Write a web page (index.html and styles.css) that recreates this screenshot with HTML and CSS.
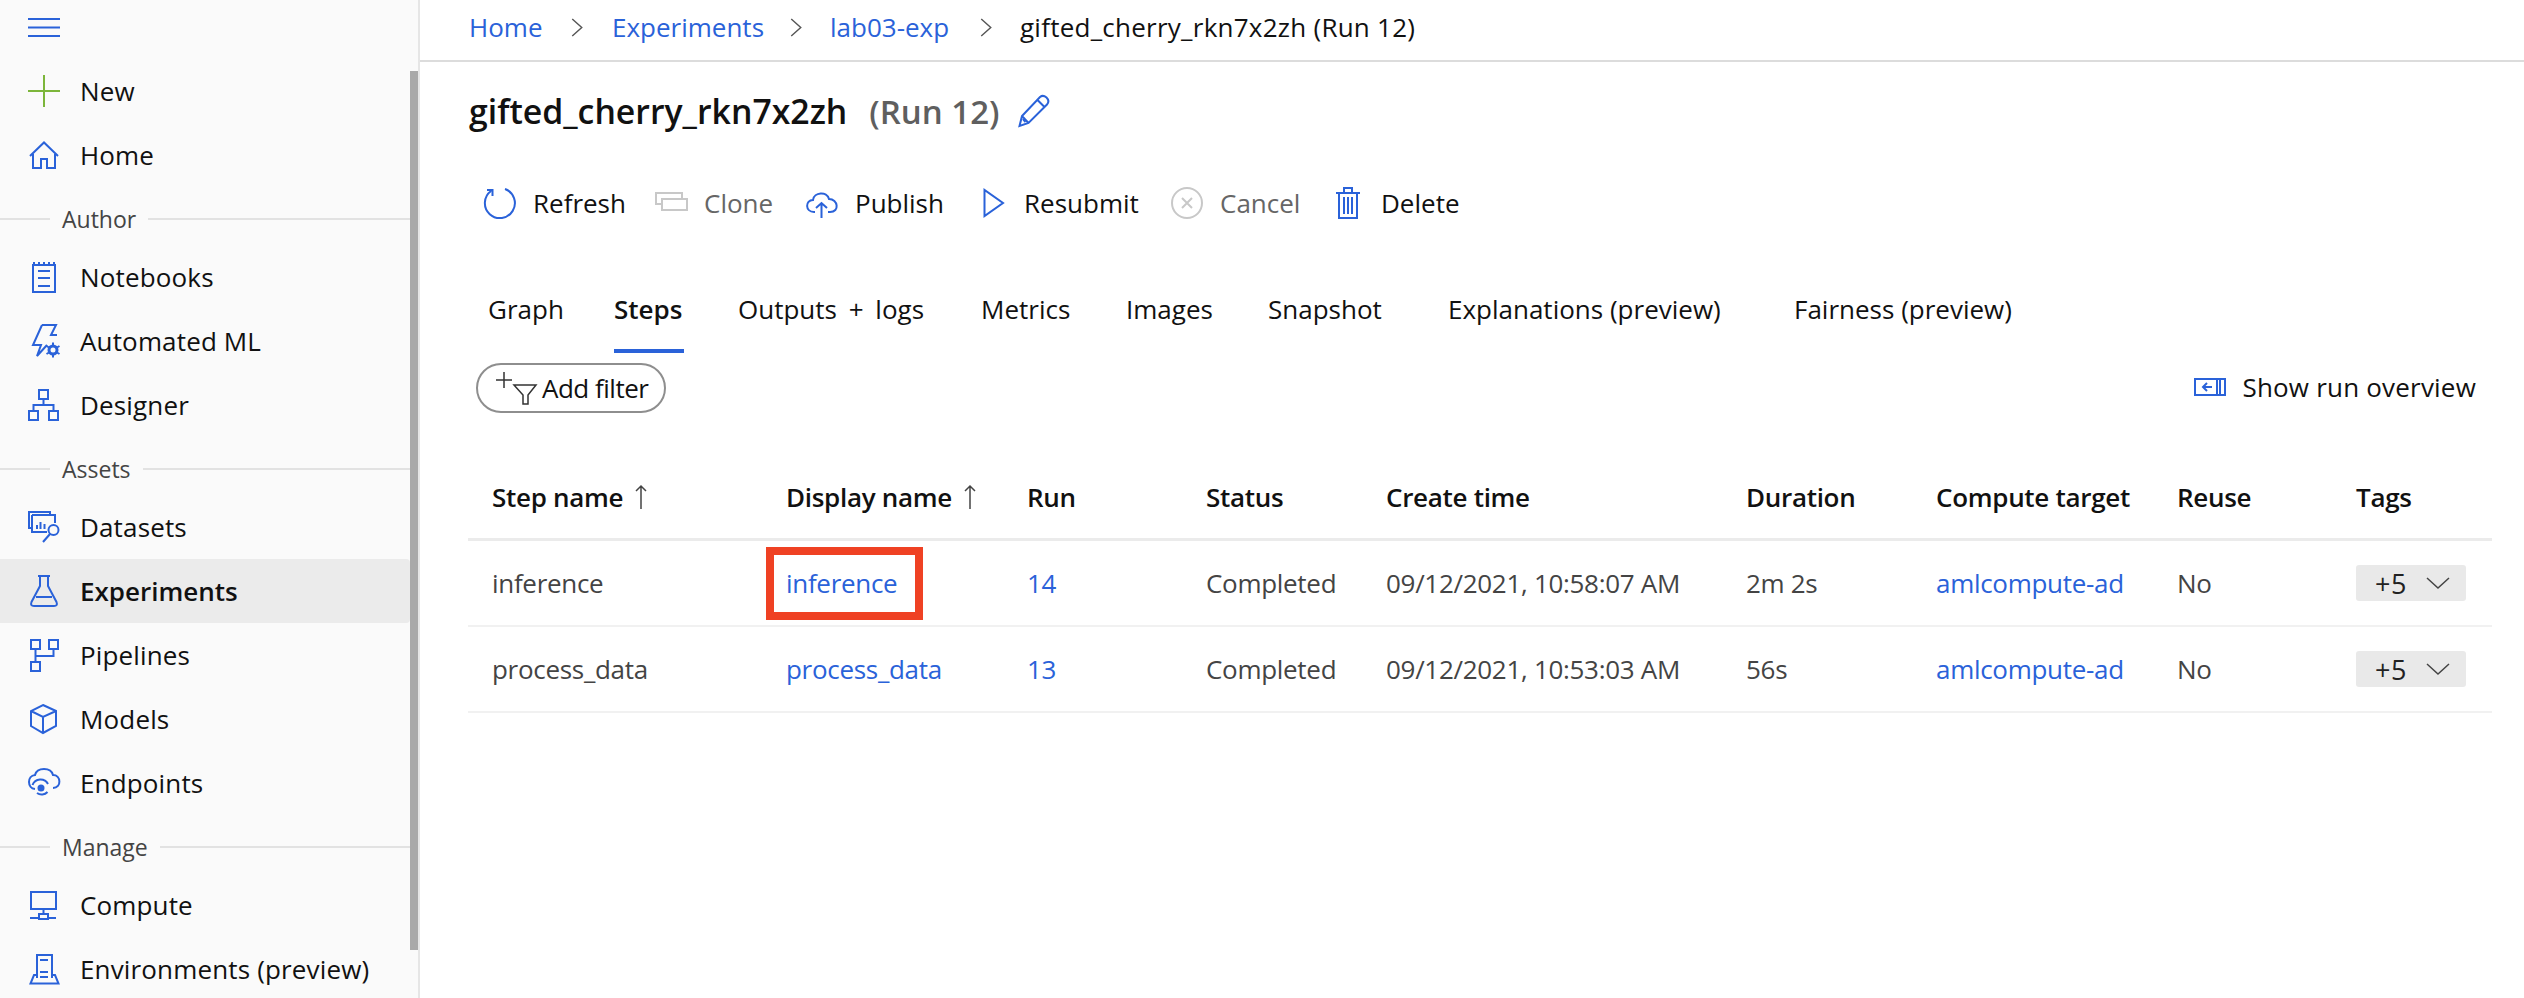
FILE: index.html
```html
<!DOCTYPE html>
<html lang="en">
<head>
<meta charset="utf-8">
<title>gifted_cherry_rkn7x2zh (Run 12)</title>
<link rel="stylesheet" href="styles.css">
</head>
<body>
<div class="app">
<aside class="side">
  <div class="burger"><svg class="ic" viewBox="0 0 32 32"><path d="M0 1H32M0 9.500H32M0 18H32"/></svg></div>
  <a class="nav"><svg class="ic green" viewBox="0 0 32 32"><path d="M16 0V32M0 16H32"/></svg><span>New</span></a>
  <a class="nav"><svg class="ic" viewBox="0 0 32 32"><path d="M2 17 16 3.500 30 17M5 15V29H13V20H19V29H27V15"/></svg><span>Home</span></a>
  <div class="sec"><span>Author</span></div>
  <a class="nav"><svg class="ic" viewBox="0 0 32 32"><path d="M5 4H27V31H5ZM10 10H22M10 17H22M10 25H22M6 4V1M11 4V1M16 4V1M21 4V1M26 4V1"/></svg><span>Notebooks</span></a>
  <a class="nav"><svg class="ic" viewBox="0 0 32 32"><path d="M14 0 5 20H13L9 31 19 20M14 0H28L23 10H29"/><circle cx="25" cy="25" r="4" class="thick"/><path d="M25 17.500V20.500M25 29.500V32.500M18.500 21 21 22.500M29 27.500 31.500 29M18.500 29 21 27.500M29 22.500 31.500 21"/></svg><span>Automated ML</span></a>
  <a class="nav"><svg class="ic" viewBox="0 0 32 32"><path d="M11 1H20V10H11ZM1 22H10V31H1ZM21 22H30V31H21ZM15.500 10V16M5.500 22V16H25.500V22"/></svg><span>Designer</span></a>
  <div class="sec"><span>Assets</span></div>
  <a class="nav"><svg class="ic" viewBox="0 0 32 32"><path d="M22 3.500V1H1V17H4M4 4H27V12M4 4V21H19M9 18V14M12.500 18V11M16.500 18V13"/><circle cx="25.500" cy="19" r="5"/><path d="M22 23 15 31"/></svg><span>Datasets</span></a>
  <a class="nav active"><svg class="ic" viewBox="0 0 32 32"><path d="M10 1H22M12 1V11L3.500 27Q2 31 6 31H26Q30 31 28.500 27L20 11V1M8 22H24"/></svg><span>Experiments</span></a>
  <a class="nav"><svg class="ic" viewBox="0 0 32 32"><path d="M3 1H12V10H3ZM21 1H30V10H21ZM3 23H12V32H3ZM7.500 10V23M7.500 17H25.500V10"/></svg><span>Pipelines</span></a>
  <a class="nav"><svg class="ic" viewBox="0 0 32 32"><path d="M15 2 28 8V23L15 30 3 23V8ZM3 8 15 14 28 8M15 14V30"/></svg><span>Models</span></a>
  <a class="nav"><svg class="ic" viewBox="0 0 32 32"><path d="M7 22C-1 21-1 9 7 8 9 0 23 0 25 8 33 8 34 21 25 21M4.500 18A8.500 8.500 0 0 1 20 17M9 26A8 8 0 0 0 19.500 25"/><circle cx="13" cy="21" r="3.500" class="solid"/></svg><span>Endpoints</span></a>
  <div class="sec"><span>Manage</span></div>
  <a class="nav"><svg class="ic" viewBox="0 0 32 32"><path d="M3 3H28V20H3ZM15.500 20V25M11 25H20V30H11ZM2 29H11M20 29H28"/></svg><span>Compute</span></a>
  <a class="nav"><svg class="ic" viewBox="0 0 32 32"><path d="M9 25V2H24V25M12 7H20M12 19H20M12 24H20M9 22H6L2.500 30.500H30.500L27 22H24"/></svg><span>Environments (preview)</span></a>
  <div class="thumb"></div>
</aside>
<main class="main">
  <nav class="crumbs">
    <a class="link">Home</a><svg class="chev" viewBox="0 0 12 20"><path d="M1 1 11 10 1 19"/></svg>
    <a class="link">Experiments</a><svg class="chev" viewBox="0 0 12 20"><path d="M1 1 11 10 1 19"/></svg>
    <a class="link">lab03-exp</a><svg class="chev" viewBox="0 0 12 20"><path d="M1 1 11 10 1 19"/></svg>
    <span class="here">gifted_cherry_rkn7x2zh (Run 12)</span>
  </nav>
  <header class="title">
    <h1>gifted_cherry_rkn7x2zh</h1><span class="run">(Run 12)</span>
    <svg class="ic pencil" viewBox="0 0 32 32"><path d="M1.500 31 4 21 22 2Q25-.5 28.500 2.500 32 6 29 9.500L10.500 28ZM4 21 10.500 28M19.500 5 26.500 12M5 24 7.500 27"/></svg>
  </header>
  <div class="toolbar">
    <a class="tool"><svg class="ic" viewBox="0 0 32 32"><path d="M21 2A15 15 0 1 1 7 4M3 3H8.500V9"/></svg><span>Refresh</span></a>
    <a class="tool off"><svg class="ic" viewBox="0 0 32 32"><path d="M7 17H1V6H27V12M7 12H32V23H7Z"/></svg><span>Clone</span></a>
    <a class="tool"><svg class="ic" viewBox="0 0 32 32"><path d="M9 25H8C-1 25-1 13 7 13 8 5 21 4 23 12 32 12 34 25 24 25H22M15.500 31V16M10 21 15.500 16 21 21"/></svg><span>Publish</span></a>
    <a class="tool"><svg class="ic play" viewBox="0 0 22 32"><path d="M1.500 3V29L20 16Z"/></svg><span>Resubmit</span></a>
    <a class="tool off"><svg class="ic" viewBox="0 0 32 32"><circle cx="16" cy="16" r="15"/><path d="M11 11 21 21M21 11 11 21"/></svg><span>Cancel</span></a>
    <a class="tool"><svg class="ic bin" viewBox="0 0 26 32"><path d="M1 6H25M4 6V31H22V6M9 5V1H17V5M9 10V27M13 10V27M17 10V27"/></svg><span>Delete</span></a>
  </div>
  <div class="tabs">
    <a class="tab">Graph</a>
    <a class="tab current"><span>Steps</span></a>
    <a class="tab wide">Outputs + logs</a>
    <a class="tab">Metrics</a>
    <a class="tab">Images</a>
    <a class="tab">Snapshot</a>
    <a class="tab">Explanations (preview)</a>
    <a class="tab">Fairness (preview)</a>
  </div>
  <div class="filters">
    <button class="pill"><svg class="filter-ic" viewBox="0 0 42 34"><path d="M1 9H17M9 1V17M19 14H41L33 24V33H28V24Z"/></svg><span>Add filter</span></button>
    <a class="overview"><svg class="ic over-ic" viewBox="0 0 32 18"><path d="M1 1H31V17H1ZM23 1V17M26 1V17M18 9H9M13 5 9 9 13 13"/></svg><span>Show run overview</span></a>
  </div>
  <section class="table">
    <div class="row head">
      <div class="cell">Step name<svg class="up" viewBox="0 0 12 24"><path d="M6 24V1M1 6 6 1 11 6"/></svg></div>
      <div class="cell">Display name<svg class="up" viewBox="0 0 12 24"><path d="M6 24V1M1 6 6 1 11 6"/></svg></div>
      <div class="cell">Run</div><div class="cell">Status</div><div class="cell">Create time</div><div class="cell">Duration</div><div class="cell">Compute target</div><div class="cell">Reuse</div><div class="cell">Tags</div>
    </div>
    <div class="row">
      <div class="cell">inference</div>
      <div class="cell"><a class="link">inference</a><div class="mark"></div></div>
      <div class="cell"><a class="link">14</a></div>
      <div class="cell">Completed</div>
      <div class="cell">09/12/2021, 10:58:07 AM</div>
      <div class="cell">2m 2s</div>
      <div class="cell"><a class="link">amlcompute-ad</a></div>
      <div class="cell">No</div>
      <div class="cell"><div class="tag"><span>+5</span><svg class="tag-chev" viewBox="0 0 24 12"><path d="M1 1 12 11 23 1"/></svg></div></div>
    </div>
    <div class="row">
      <div class="cell">process_data</div>
      <div class="cell"><a class="link">process_data</a></div>
      <div class="cell"><a class="link">13</a></div>
      <div class="cell">Completed</div>
      <div class="cell">09/12/2021, 10:53:03 AM</div>
      <div class="cell">56s</div>
      <div class="cell"><a class="link">amlcompute-ad</a></div>
      <div class="cell">No</div>
      <div class="cell"><div class="tag"><span>+5</span><svg class="tag-chev" viewBox="0 0 24 12"><path d="M1 1 12 11 23 1"/></svg></div></div>
    </div>
  </section>
</main>
</div>
</body>
</html>
```
FILE: styles.css
```css
* { box-sizing: border-box; }
html, body { margin: 0; height: 100%; overflow: hidden; background: #fff; }
body { font-family: "Open Sans", "Noto Sans", sans-serif; font-size: 26px; color: #111; }
.app { display: flex; height: 998px; }

svg { display: block; flex: none; fill: none; stroke: #2a62d9; stroke-width: 2; overflow: visible; }
.ic { width: 32px; height: 32px; }
.ic.green { stroke: #7cb53a; }
.solid { fill: #2a62d9; stroke: none; }
.thick { stroke-width: 3; }

.side { position: relative; flex: 0 0 420px; height: 998px; background: #fafafa; border-right: 2px solid #e6e6e6; overflow: hidden; }
.burger { height: 59px; padding: 18px 0 0 28px; }
.nav { display: flex; align-items: center; gap: 20px; height: 64px; width: 410px; padding-left: 28px; color: #111; letter-spacing: 0.15px; }
.nav.active { background: #ebebeb; border-radius: 0 4px 4px 0; font-weight: 600; letter-spacing: 0; }
.sec { display: flex; align-items: center; height: 64px; width: 410px; color: #444; font-size: 23px; }
.sec::before { content: ""; flex: 0 0 50px; height: 2px; background: #e2e2e2; }
.sec::after { content: ""; flex: 1; height: 2px; background: #e2e2e2; }
.sec span { padding: 0 12px; }
.sec + .nav { margin-top: -6px; }
.thumb { position: absolute; left: 410px; top: 71px; width: 8px; height: 879px; background: #a9a9a9; }

.main { flex: 1; min-width: 0; }
.link { color: #2a62d9; }
.crumbs { display: grid; grid-template-columns: 102px 41px 178px 40px 150px 40px auto; justify-content: start; align-items: center; height: 62px; padding: 0 0 6px 49px; border-bottom: 2px solid #dcdcdc; white-space: nowrap; }
.here { letter-spacing: 0.25px; }
.chev { width: 12px; height: 19px; stroke: #555; stroke-width: 1.500; }
.title { display: flex; align-items: center; height: 100px; padding: 0 0 2px 49px; }
h1 { margin: 0; font-size: 33.800px; font-weight: 600; }
.run { margin-left: 22px; font-size: 33px; font-weight: 600; color: #5f5f5f; }
.pencil { margin-left: 18px; }
.toolbar { display: grid; grid-template-columns: 171px 151px 177px 188px 164px auto; justify-content: start; align-items: center; height: 82px; padding-left: 64px; }
.tool { display: flex; align-items: center; gap: 17px; color: #111; }
.tool.off { color: #666; }
.tool.off svg { stroke: #c8c8c8; }
.play { width: 22px; margin-right: 2px; }
.bin { width: 26px; margin-right: 3px; }
.tabs { display: grid; grid-template-columns: 127px 123px 243px 145px 142px 180px 346px auto; justify-content: start; height: 109px; padding: 47px 0 0 68px; line-height: 36px; }
.tab.current { font-weight: 600; }
.tab.current span { display: block; width: 70px; height: 62px; margin-left: -1px; border-bottom: 4px solid #2a62d9; }
.tab.wide { word-spacing: 5px; }
.filters { display: flex; justify-content: space-between; align-items: center; height: 50px; margin-top: 10px; padding: 0 48px 0 56px; }
.pill { display: flex; align-items: center; width: 190px; height: 50px; padding: 0 0 0 17px; border: 2px solid #8e8e8e; border-radius: 25px; background: #fff; font: inherit; color: #111; letter-spacing: -0.5px; }
.filter-ic { width: 42px; height: 34px; margin-right: 5px; stroke: #333; stroke-width: 1.500; }
.overview { display: flex; align-items: center; gap: 16px; letter-spacing: 0.2px; padding-bottom: 2px; }
.over-ic { width: 32px; height: 18px; }
.table { margin: 43px 32px 0 48px; }
.row { display: grid; grid-template-columns: 294px 241px 179px 180px 360px 190px 241px 179px 136px; height: 86px; border-bottom: 2px solid #f1f1f1; color: #444; padding-left: 24px; letter-spacing: -0.3px; }
.row.head { height: 85px; border-bottom: 3px solid #ebebeb; color: #111; font-weight: 600; }
.cell { position: relative; display: flex; align-items: center; white-space: nowrap; }
.up { width: 12px; height: 24px; margin-left: 12px; stroke: #444; stroke-width: 1.500; }
.mark { position: absolute; left: -20px; top: 6px; width: 157px; height: 73px; border: 8px solid #ef4123; }
.tag { display: flex; align-items: center; width: 110px; height: 36px; padding-left: 19px; background: #e9e9e9; border-radius: 3px; color: #222; font-size: 27px; letter-spacing: 0.5px; }
.tag-chev { width: 24px; height: 12px; margin-left: 19px; stroke: #444; stroke-width: 1.500; }
```
